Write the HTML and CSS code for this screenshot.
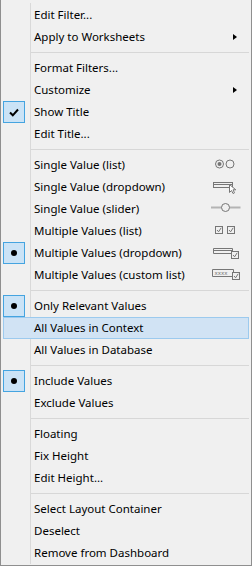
FILE: index.html
```html
<!DOCTYPE html>
<html>
<head>
<meta charset="utf-8">
<link rel="stylesheet" href="styles.css">
</head>
<body>
<div class="menu">
  <ul class="list">
    <li class="item"><span class="mark"></span><span class="label">Edit Filter...</span></li>
    <li class="item"><span class="mark"></span><span class="label">Apply to Worksheets</span><span class="arrow"></span></li>
    <li class="sep"></li>
    <li class="item"><span class="mark"></span><span class="label">Format Filters...</span></li>
    <li class="item"><span class="mark"></span><span class="label">Customize</span><span class="arrow"></span></li>
    <li class="item"><span class="mark on"><svg width="10" height="9" viewBox="0 0 10 9"><path d="M1 4.5 L3.8 7.3 L9 1.5" fill="none" stroke="#000" stroke-width="2"/></svg></span><span class="label">Show Title</span></li>
    <li class="item"><span class="mark"></span><span class="label">Edit Title...</span></li>
    <li class="sep"></li>
    <li class="item"><span class="mark"></span><span class="label">Single Value (list)</span>
      <svg class="icon" width="30" height="22" viewBox="0 0 30 22"><circle cx="8.5" cy="10" r="4" fill="none" stroke="#767676"/><circle cx="8.5" cy="10" r="2" fill="#767676"/><circle cx="19" cy="10" r="4" fill="none" stroke="#767676"/></svg></li>
    <li class="item"><span class="mark"></span><span class="label">Single Value (dropdown)</span>
      <svg class="icon" width="30" height="22" viewBox="0 0 30 22"><rect x="2.5" y="6.5" width="19" height="5" fill="none" stroke="#767676"/><line x1="3" y1="8.5" x2="21" y2="8.5" stroke="#767676"/><path d="M18.5 8.5 L18.5 16.5 L20.5 14.5 L22 17.5 L23.5 16.8 L22 13.8 L24.8 13.8 Z" fill="#fff" stroke="#767676" stroke-linejoin="round"/></svg></li>
    <li class="item"><span class="mark"></span><span class="label">Single Value (slider)</span>
      <svg class="icon" width="30" height="22" viewBox="0 0 30 22"><line x1="0" y1="9.5" x2="29.5" y2="9.5" stroke="#b4b4b4" stroke-width="2"/><circle cx="14.5" cy="9.5" r="4" fill="#f0f0f0" stroke="#767676"/></svg></li>
    <li class="item"><span class="mark"></span><span class="label">Multiple Values (list)</span>
      <svg class="icon" width="30" height="22" viewBox="0 0 30 22"><rect x="4.5" y="6.5" width="7" height="7" fill="none" stroke="#767676"/><path d="M6 10 L7.6 11.8 L10.2 7.8" fill="none" stroke="#767676"/><rect x="16.5" y="6.5" width="7" height="7" fill="none" stroke="#767676"/><path d="M18 10 L19.6 11.8 L22.2 7.8" fill="none" stroke="#767676"/></svg></li>
    <li class="item"><span class="mark on"><span class="dot"></span></span><span class="label">Multiple Values (dropdown)</span>
      <svg class="icon" width="30" height="22" viewBox="0 0 30 22"><path d="M22 11.5 L2.5 11.5 L2.5 6.5 L21.5 6.5 L21.5 9" fill="none" stroke="#767676"/><line x1="3" y1="8.5" x2="21" y2="8.5" stroke="#767676"/><rect x="20.5" y="9.5" width="7" height="7" fill="#f0f0f0" stroke="#767676"/><path d="M22 13 L23.6 14.8 L26.2 10.8" fill="none" stroke="#767676"/></svg></li>
    <li class="item"><span class="mark"></span><span class="label">Multiple Values (custom list)</span>
      <svg class="icon" width="30" height="22" viewBox="0 0 30 22"><path d="M21.5 12.5 L1.5 12.5 L1.5 5.5 L22.5 5.5 L22.5 8" fill="none" stroke="#767676"/><text x="3.5" y="11" font-family="DejaVu Sans, sans-serif" font-size="5.5" fill="#767676">xxxx</text><rect x="21.5" y="8.5" width="7" height="7" fill="#f0f0f0" stroke="#767676"/><path d="M23 12 L24.6 13.8 L27.2 9.8" fill="none" stroke="#767676"/></svg></li>
    <li class="sep"></li>
    <li class="item"><span class="mark on"><span class="dot"></span></span><span class="label">Only Relevant Values</span></li>
    <li class="item hot"><span class="mark"></span><span class="label">All Values in Context</span></li>
    <li class="item"><span class="mark"></span><span class="label">All Values in Database</span></li>
    <li class="sep"></li>
    <li class="item"><span class="mark on"><span class="dot"></span></span><span class="label">Include Values</span></li>
    <li class="item"><span class="mark"></span><span class="label">Exclude Values</span></li>
    <li class="sep"></li>
    <li class="item"><span class="mark"></span><span class="label">Floating</span></li>
    <li class="item"><span class="mark"></span><span class="label">Fix Height</span></li>
    <li class="item"><span class="mark"></span><span class="label">Edit Height...</span></li>
    <li class="sep"></li>
    <li class="item"><span class="mark"></span><span class="label">Select Layout Container</span></li>
    <li class="item"><span class="mark"></span><span class="label">Deselect</span></li>
    <li class="item"><span class="mark"></span><span class="label">Remove from Dashboard</span></li>
  </ul>
</div>
</body>
</html>
```

FILE: styles.css
```css
html, body {
  margin: 0;
  padding: 0;
  background: #f0f0f0;
}

.menu {
  width: 252px;
  height: 566px;
  box-sizing: border-box;
  background: #f0f0f0;
  border: 1px solid #8f8f8f;
  border-top: none;
  padding: 3px 0 1px;
  font-family: "Noto Sans", "Open Sans", sans-serif;
  font-size: 11.5px;
  color: #000;
}

.list {
  list-style: none;
  margin: 0;
  padding: 1px 0 0;
  background: linear-gradient(#d9d9d9, #d9d9d9) 29px 0 / 1px 100% no-repeat;
}

.item {
  display: flex;
  align-items: center;
  height: 22px;
  margin: 0 2px;
}

.item.hot {
  background: #d1e3f4;
  box-shadow: inset 0 0 0 1px #9ccaee;
}

.mark {
  width: 22px;
  height: 22px;
  box-sizing: border-box;
  flex: none;
  display: flex;
  align-items: center;
  justify-content: center;
}

.mark.on {
  background: #cbe3f6;
  border: 1px solid #45a4e0;
}

.dot {
  width: 6px;
  height: 6px;
  border-radius: 50%;
  background: #000;
}

.label {
  flex: 1;
  margin-left: 9px;
  white-space: nowrap;
  line-height: 22px;
}

.arrow {
  width: 0;
  height: 0;
  border-top: 3.5px solid transparent;
  border-bottom: 3.5px solid transparent;
  border-left: 4px solid #000;
  margin-right: 12px;
}

.icon {
  flex: none;
  margin-right: 8px;
}

.sep {
  height: 9px;
  margin: 0 2px 0 30px;
  background: linear-gradient(#d7d7d7, #d7d7d7) 0 4px / 100% 1px no-repeat;
}
```
